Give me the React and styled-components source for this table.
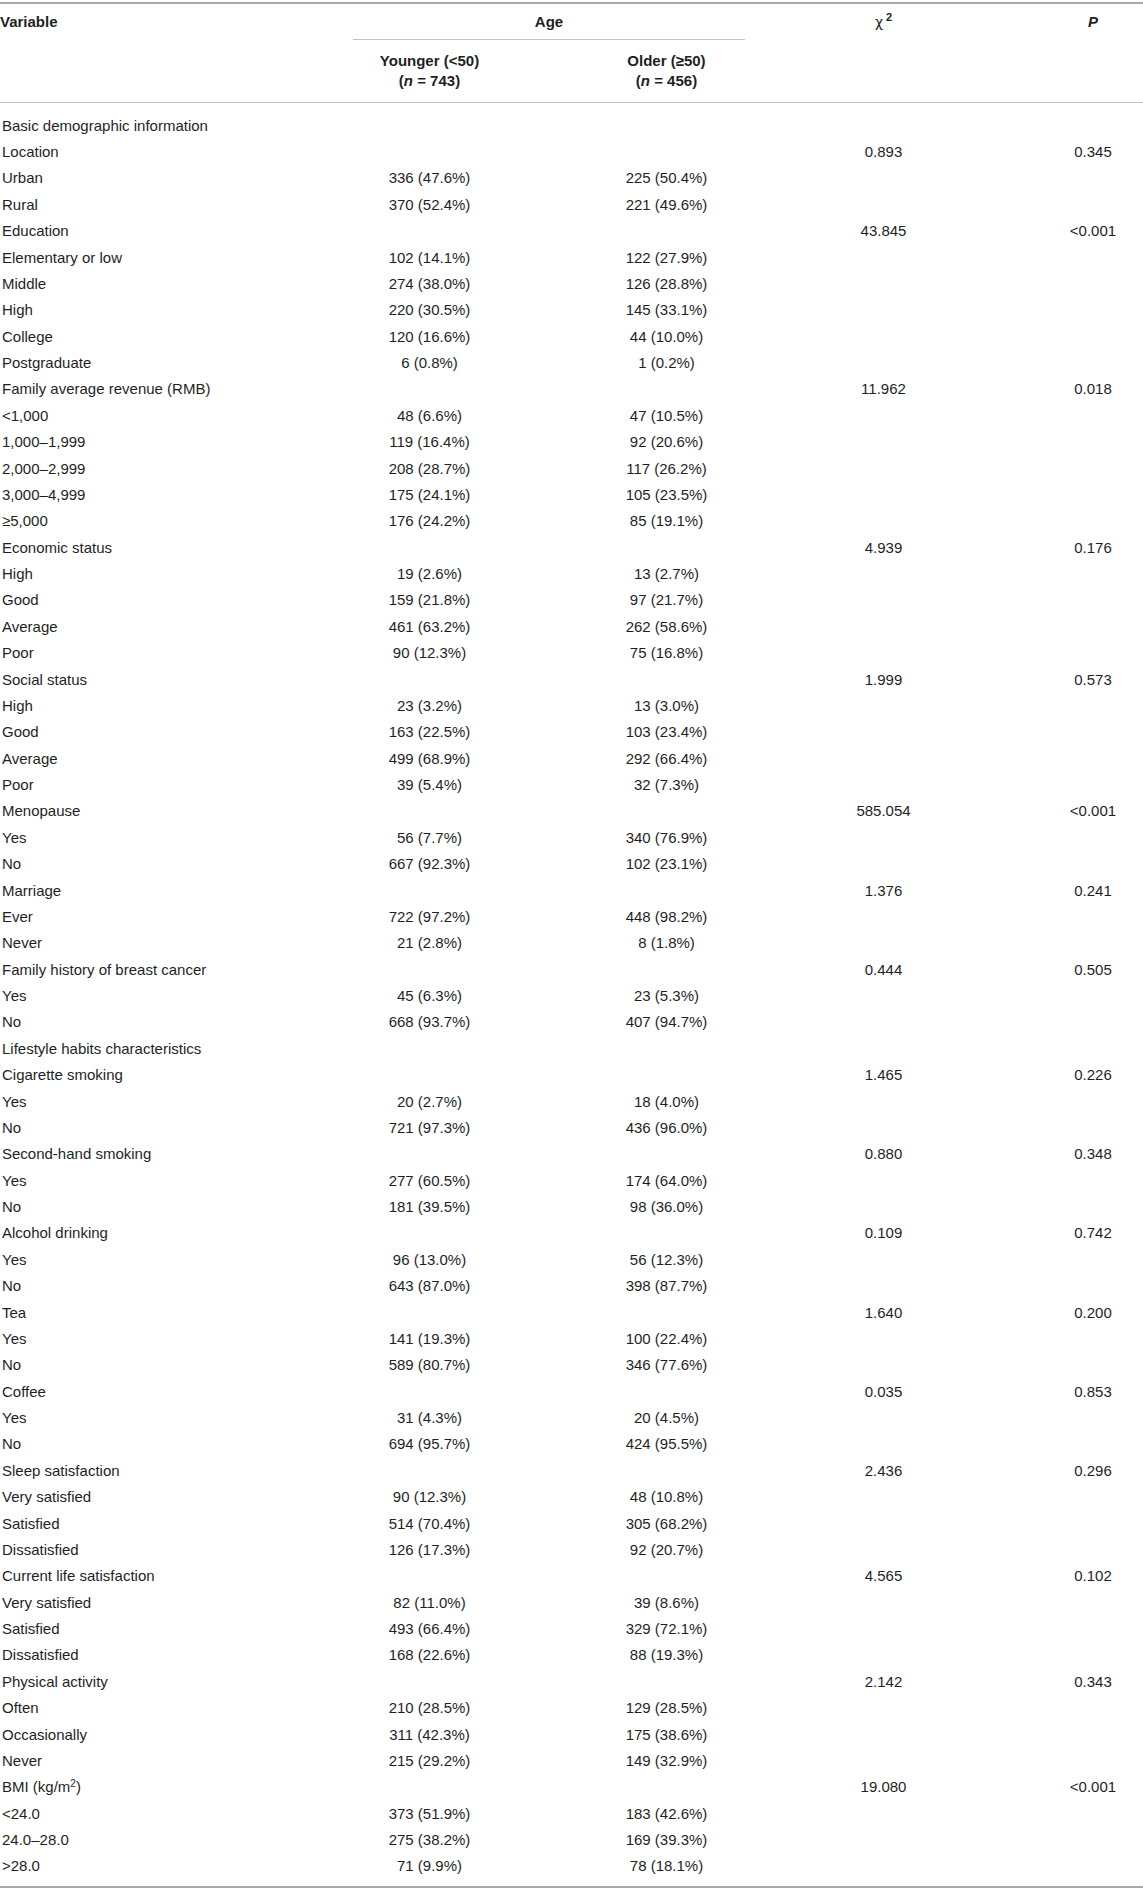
import styled, { createGlobalStyle } from 'styled-components';

const GlobalStyle = createGlobalStyle`
  html, body {
    margin: 0;
    padding: 0;
    background: #ffffff;
  }
  body {
    font-family: 'Liberation Sans', Arial, Helvetica, sans-serif;
    color: #1f1f1f;
    -webkit-font-smoothing: antialiased;
  }
`;

const COLUMNS = '311px 237px 237px 197px 1fr';

const Table = styled.div`
  width: 1143px;
  margin-top: 2px;
  border-top: 2px solid #a8a8a8;
  border-bottom: 2px solid #a8a8a8;
  font-size: 15px;
`;

const Head = styled.div`
  display: grid;
  grid-template-columns: ${COLUMNS};
  grid-template-rows: auto auto;
  border-bottom: 1px solid #c4c4c4;
  font-weight: 700;
  line-height: 20px;
`;

const HeadCell = styled.div`
  grid-column: ${(p) => p.$col};
  grid-row: ${(p) => p.$row || '1 / span 2'};
  padding-top: 8px;
  padding-left: ${(p) => p.$padLeft || 0}px;
  text-align: ${(p) => (p.$left ? 'left' : 'center')};
`;

const Spanner = styled.div`
  grid-column: 2 / 4;
  grid-row: 1;
  margin: 0 40px 0 42px;
  padding: 8px 0 7px;
  border-bottom: 1px solid #c4c4c4;
  text-align: center;
`;

const GroupCell = styled.div`
  grid-column: ${(p) => p.$col};
  grid-row: 2;
  padding: 11px 0;
  text-align: center;
`;

const Chi = styled.span`
  font-weight: 400;
  font-family: 'DejaVu Sans', 'Liberation Sans', sans-serif;
  font-size: 14px;
`;

const Sup = styled.sup`
  font-size: ${(p) => p.$size || 10}px;
  line-height: 0;
  vertical-align: ${(p) => p.$raise || 6}px;
  margin-left: ${(p) => p.$gap || 0}px;
`;

const Body = styled.div`
  padding: 9.5px 0 6px;
`;

const Row = styled.div`
  display: grid;
  grid-template-columns: ${COLUMNS};
  height: 26.38px;
  align-items: center;
  line-height: 18px;
`;

const Cell = styled.div`
  text-align: ${(p) => (p.$left ? 'left' : 'center')};
  padding-left: ${(p) => p.$padLeft || 0}px;
  white-space: nowrap;
`;

const rows = [
  ['Basic demographic information'],
  ['Location', '', '', '0.893', '0.345'],
  ['Urban', '336 (47.6%)', '225 (50.4%)'],
  ['Rural', '370 (52.4%)', '221 (49.6%)'],
  ['Education', '', '', '43.845', '<0.001'],
  ['Elementary or low', '102 (14.1%)', '122 (27.9%)'],
  ['Middle', '274 (38.0%)', '126 (28.8%)'],
  ['High', '220 (30.5%)', '145 (33.1%)'],
  ['College', '120 (16.6%)', '44 (10.0%)'],
  ['Postgraduate', '6 (0.8%)', '1 (0.2%)'],
  ['Family average revenue (RMB)', '', '', '11.962', '0.018'],
  ['<1,000', '48 (6.6%)', '47 (10.5%)'],
  ['1,000–1,999', '119 (16.4%)', '92 (20.6%)'],
  ['2,000–2,999', '208 (28.7%)', '117 (26.2%)'],
  ['3,000–4,999', '175 (24.1%)', '105 (23.5%)'],
  ['≥5,000', '176 (24.2%)', '85 (19.1%)'],
  ['Economic status', '', '', '4.939', '0.176'],
  ['High', '19 (2.6%)', '13 (2.7%)'],
  ['Good', '159 (21.8%)', '97 (21.7%)'],
  ['Average', '461 (63.2%)', '262 (58.6%)'],
  ['Poor', '90 (12.3%)', '75 (16.8%)'],
  ['Social status', '', '', '1.999', '0.573'],
  ['High', '23 (3.2%)', '13 (3.0%)'],
  ['Good', '163 (22.5%)', '103 (23.4%)'],
  ['Average', '499 (68.9%)', '292 (66.4%)'],
  ['Poor', '39 (5.4%)', '32 (7.3%)'],
  ['Menopause', '', '', '585.054', '<0.001'],
  ['Yes', '56 (7.7%)', '340 (76.9%)'],
  ['No', '667 (92.3%)', '102 (23.1%)'],
  ['Marriage', '', '', '1.376', '0.241'],
  ['Ever', '722 (97.2%)', '448 (98.2%)'],
  ['Never', '21 (2.8%)', '8 (1.8%)'],
  ['Family history of breast cancer', '', '', '0.444', '0.505'],
  ['Yes', '45 (6.3%)', '23 (5.3%)'],
  ['No', '668 (93.7%)', '407 (94.7%)'],
  ['Lifestyle habits characteristics'],
  ['Cigarette smoking', '', '', '1.465', '0.226'],
  ['Yes', '20 (2.7%)', '18 (4.0%)'],
  ['No', '721 (97.3%)', '436 (96.0%)'],
  ['Second-hand smoking', '', '', '0.880', '0.348'],
  ['Yes', '277 (60.5%)', '174 (64.0%)'],
  ['No', '181 (39.5%)', '98 (36.0%)'],
  ['Alcohol drinking', '', '', '0.109', '0.742'],
  ['Yes', '96 (13.0%)', '56 (12.3%)'],
  ['No', '643 (87.0%)', '398 (87.7%)'],
  ['Tea', '', '', '1.640', '0.200'],
  ['Yes', '141 (19.3%)', '100 (22.4%)'],
  ['No', '589 (80.7%)', '346 (77.6%)'],
  ['Coffee', '', '', '0.035', '0.853'],
  ['Yes', '31 (4.3%)', '20 (4.5%)'],
  ['No', '694 (95.7%)', '424 (95.5%)'],
  ['Sleep satisfaction', '', '', '2.436', '0.296'],
  ['Very satisfied', '90 (12.3%)', '48 (10.8%)'],
  ['Satisfied', '514 (70.4%)', '305 (68.2%)'],
  ['Dissatisfied', '126 (17.3%)', '92 (20.7%)'],
  ['Current life satisfaction', '', '', '4.565', '0.102'],
  ['Very satisfied', '82 (11.0%)', '39 (8.6%)'],
  ['Satisfied', '493 (66.4%)', '329 (72.1%)'],
  ['Dissatisfied', '168 (22.6%)', '88 (19.3%)'],
  ['Physical activity', '', '', '2.142', '0.343'],
  ['Often', '210 (28.5%)', '129 (28.5%)'],
  ['Occasionally', '311 (42.3%)', '175 (38.6%)'],
  ['Never', '215 (29.2%)', '149 (32.9%)'],
  ['BMI', '', '', '19.080', '<0.001'],
  ['<24.0', '373 (51.9%)', '183 (42.6%)'],
  ['24.0–28.0', '275 (38.2%)', '169 (39.3%)'],
  ['>28.0', '71 (9.9%)', '78 (18.1%)'],
];

function Label({ text }) {
  // the BMI row carries a unit with a superscript
  if (text === 'BMI') {
    return (
      <>
        BMI (kg/m<Sup $size={10} $raise={5}>2</Sup>)
      </>
    );
  }
  return text;
}

export default function App() {
  return (
    <>
      <GlobalStyle />
      <Table>
        <Head>
          <HeadCell $col={1} $left>
            Variable
          </HeadCell>
          <Spanner>Age</Spanner>
          <HeadCell $col={4}>
            <Chi>χ</Chi>
            <Sup $size={11} $raise={6} $gap={3}>2</Sup>
          </HeadCell>
          <HeadCell $col={5} $padLeft={61}>
            <i>P</i>
          </HeadCell>
          <GroupCell $col={2}>
            Younger (&lt;50)
            <br />(<i>n</i> = 743)
          </GroupCell>
          <GroupCell $col={3}>
            Older (≥50)
            <br />(<i>n</i> = 456)
          </GroupCell>
        </Head>
        <Body>
          {rows.map(([label, young = '', old = '', chi = '', p = ''], i) => (
            <Row key={i}>
              <Cell $left $padLeft={2}>
                <Label text={label} />
              </Cell>
              <Cell>{young}</Cell>
              <Cell>{old}</Cell>
              <Cell>{chi}</Cell>
              <Cell $padLeft={61}>{p}</Cell>
            </Row>
          ))}
        </Body>
      </Table>
    </>
  );
}
